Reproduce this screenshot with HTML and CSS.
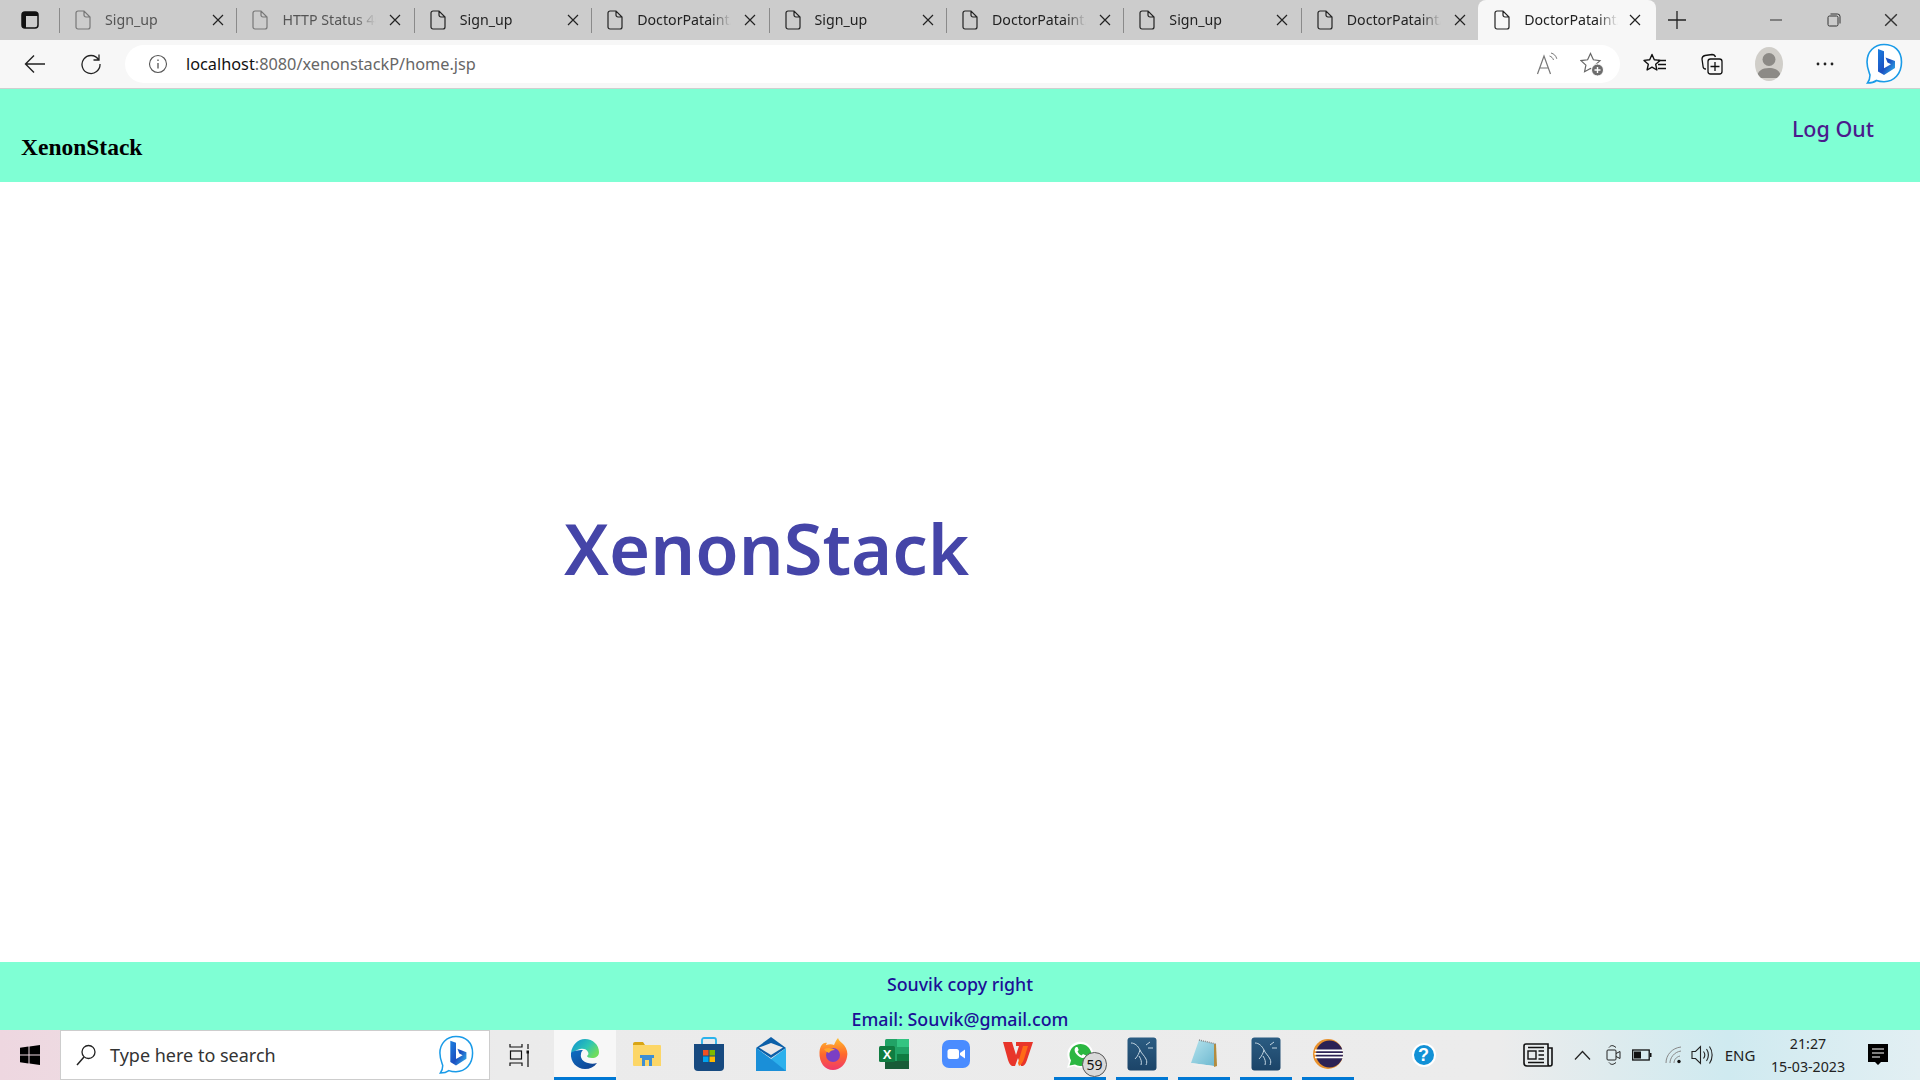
FILE: index.html
```html
<!DOCTYPE html>
<html lang="en">
<head>
    <meta charset="UTF-8">
    <meta name="viewport" content="width=device-width, initial-scale=1.0">
    <title>XenonStack</title>
    <link rel="stylesheet" href="styles.css">
</head>
<body>
    <!-- shared icons -->
    <svg class="defs" width="0" height="0">
        <defs>
            <symbol id="page" viewBox="0 0 16 20"><path d="M1 3a2 2 0 0 1 2-2h6l6 6v10a2 2 0 0 1-2 2H3a2 2 0 0 1-2-2zM9 1v4a2 2 0 0 0 2 2h4" fill="none" stroke="currentColor" stroke-width="1.2"/></symbol>
            <symbol id="cross" viewBox="0 0 12 12"><path d="M1 1l10 10M11 1L1 11" fill="none" stroke="currentColor" stroke-width="1.2"/></symbol>
            <symbol id="bing" viewBox="0 0 38 42">
                <path d="M19 1.500C9 1.500 2 9 2 19c0 6 2 10 3 13 0 3-1 6-2.500 8 4 0 7-1 9-2.500 2 .8 4.500 1.200 7.500 1.200 10 0 17.500-8 17.500-19.700S29 1.500 19 1.500z" fill="#fff" stroke="#1a9be8" stroke-width="1.600"/>
                <path d="M13 6l6 2.200v17l7-4-3.500-1.700-2-5L30 18v7l-11 7-6-3.500z" fill="url(#bingFill)"/>
            </symbol>
            <linearGradient id="bingFill" x1="0" y1="0" x2="1" y2="1"><stop offset="0" stop-color="#1b7fe0"/><stop offset=".55" stop-color="#1d4fc0"/><stop offset="1" stop-color="#35c1f1"/></linearGradient>
            <symbol id="dolphin" viewBox="0 0 30 34">
                <rect x=".5" y=".5" width="29" height="33" rx="3" fill="url(#dbFill)"/>
                <path d="M4 6c4 0 7 3 9 7 1 3 4 5 6 9 1 2 1 4 0 6M13 13c-1 3-2 6-5 9M19 8l4-3M21 11h5M12 19c2 3 3 6 2 9" fill="none" stroke="#c4d6e2" stroke-width="1"/>
            </symbol>
            <linearGradient id="dbFill" x1="0" y1="0" x2="0" y2="1"><stop offset="0" stop-color="#2b5c82"/><stop offset="1" stop-color="#1c4468"/></linearGradient>
            <linearGradient id="edgeTop" x1="0" y1="0" x2="1" y2=".6"><stop offset="0" stop-color="#0f8ed0"/><stop offset=".6" stop-color="#2cc5b5"/><stop offset="1" stop-color="#6fdc5e"/></linearGradient>
            <linearGradient id="edgeLow" x1="0" y1="0" x2="1" y2="1"><stop offset="0" stop-color="#0c6fc4"/><stop offset="1" stop-color="#123f8c"/></linearGradient>
            <linearGradient id="foxFill" x1="0" y1="0" x2="0" y2="1"><stop offset="0" stop-color="#ffbd2e"/><stop offset=".5" stop-color="#ff6a2b"/><stop offset="1" stop-color="#f0386b"/></linearGradient>
            <linearGradient id="noteFill" x1="0" y1="0" x2="1" y2="1"><stop offset="0" stop-color="#b5e4ee"/><stop offset="1" stop-color="#6cb7cf"/></linearGradient>
        </defs>
    </svg>

    <div class="tabstrip">
        <div class="strip-btn">
            <svg width="18" height="18" viewBox="0 0 18 18"><rect x="1" y="1" width="16" height="16" rx="3" fill="none" stroke="#111" stroke-width="1.500"/><path d="M1 4a3 3 0 0 1 3-3h10a3 3 0 0 1 3 3v1H1zM1 5h4v12H4a3 3 0 0 1-3-3z" fill="#111"/></svg>
        </div>
        <div class="tab tab-dim"><svg class="tab-icon"><use href="#page"/></svg><span class="tab-title">Sign_up</span><svg class="tab-close"><use href="#cross"/></svg></div>
        <div class="tab tab-dim"><svg class="tab-icon"><use href="#page"/></svg><span class="tab-title">HTTP Status 40</span><svg class="tab-close"><use href="#cross"/></svg></div>
        <div class="tab"><svg class="tab-icon"><use href="#page"/></svg><span class="tab-title">Sign_up</span><svg class="tab-close"><use href="#cross"/></svg></div>
        <div class="tab"><svg class="tab-icon"><use href="#page"/></svg><span class="tab-title">DoctorPataint/</span><svg class="tab-close"><use href="#cross"/></svg></div>
        <div class="tab"><svg class="tab-icon"><use href="#page"/></svg><span class="tab-title">Sign_up</span><svg class="tab-close"><use href="#cross"/></svg></div>
        <div class="tab"><svg class="tab-icon"><use href="#page"/></svg><span class="tab-title">DoctorPataint/</span><svg class="tab-close"><use href="#cross"/></svg></div>
        <div class="tab"><svg class="tab-icon"><use href="#page"/></svg><span class="tab-title">Sign_up</span><svg class="tab-close"><use href="#cross"/></svg></div>
        <div class="tab"><svg class="tab-icon"><use href="#page"/></svg><span class="tab-title">DoctorPataint/</span><svg class="tab-close"><use href="#cross"/></svg></div>
        <div class="tab tab-active"><svg class="tab-icon"><use href="#page"/></svg><span class="tab-title">DoctorPataint/</span><svg class="tab-close"><use href="#cross"/></svg></div>
        <div class="new-tab"><svg width="18" height="18" viewBox="0 0 18 18"><path d="M9 0v18M0 9h18" stroke="#222" stroke-width="1.300"/></svg></div>
        <div class="win-controls">
            <div class="win-btn"><svg width="14" height="14" viewBox="0 0 14 14"><path d="M1 7h12" stroke="#333" stroke-width="1"/></svg></div>
            <div class="win-btn"><svg width="14" height="14" viewBox="0 0 14 14"><rect x="1" y="3" width="10" height="10" rx="1.500" fill="none" stroke="#333"/><path d="M3.500 1h7a2.500 2.500 0 0 1 2.500 2.500v7" fill="none" stroke="#333"/></svg></div>
            <div class="win-btn"><svg width="14" height="14"><use href="#cross"/></svg></div>
        </div>
    </div>

    <div class="toolbar">
        <div class="tool-btn"><svg width="22" height="20" viewBox="0 0 22 20"><path d="M21 10H2M10 1.500L1.500 10l8.500 8.500" fill="none" stroke="#222" stroke-width="1.400"/></svg></div>
        <div class="tool-btn"><svg width="22" height="22" viewBox="0 0 22 22"><path d="M18.500 6.500A9 9 0 1 0 20 11M19 1.500v5.500h-5.500" fill="none" stroke="#222" stroke-width="1.300"/></svg></div>
        <div class="address">
            <svg class="info-icon" width="20" height="20" viewBox="0 0 20 20"><circle cx="10" cy="10" r="8.500" fill="none" stroke="#555" stroke-width="1.100"/><path d="M10 9v5.500M10 5.500v1.500" stroke="#555" stroke-width="1.300"/></svg>
            <span class="url"><span class="url-host">localhost</span>:8080/xenonstackP/home.jsp</span>
            <div class="address-actions">
                <svg width="24" height="24" viewBox="0 0 24 24"><path d="M1.500 22L8 4l6.500 18M3.800 16h8.400" fill="none" stroke="#777" stroke-width="1.200"/><path d="M13.500 4c2 .6 3.400 2 4 4M15 1c3 .8 5 2.800 5.800 5.800" fill="none" stroke="#777" stroke-width="1"/></svg>
                <svg width="24" height="24" viewBox="0 0 24 24"><path d="M10.500 1.500l2.900 6.300 6.600.8-4.900 4.500 1.300 6.600-5.900-3.300-5.900 3.300 1.300-6.600L1 8.600l6.600-.8z" fill="none" stroke="#666" stroke-width="1.200"/><circle cx="17.500" cy="18" r="6" fill="#6d6d6d" stroke="#fff" stroke-width="1"/><path d="M17.500 15v6M14.500 18h6" stroke="#fff" stroke-width="1.400"/></svg>
            </div>
        </div>
        <div class="tool-group">
            <div class="tool-btn"><svg width="24" height="24" viewBox="0 0 24 24"><path d="M9 2.500l2.300 5.300 5.700.6-4.300 3.900 1.200 5.700-4.900-2.900-4.900 2.900 1.200-5.700L1 8.400l5.700-.6z" fill="none" stroke="#111" stroke-width="1.400" stroke-linejoin="round"/><path d="M15 8.500h8M15 12.500h8M15 16.500h8" stroke="#111" stroke-width="1.400"/></svg></div>
            <div class="tool-btn tool-wide"><svg width="24" height="24" viewBox="0 0 24 24"><path d="M6 17c-2 0-3-1-3-3l-1-7c0-2 1-3 3-3.500l7-1c2 0 3 .8 3.500 2.500" fill="none" stroke="#111" stroke-width="1.300"/><rect x="8" y="7" width="14" height="15" rx="2.500" fill="#f7f7f7" stroke="#111" stroke-width="1.300"/><path d="M15 10v9M10.500 14.500h9" stroke="#111" stroke-width="1.300"/></svg></div>
            <div class="tool-btn"><div class="avatar"><svg width="28" height="28" viewBox="0 0 28 28"><circle cx="14" cy="9.500" r="6.500" fill="#8c8a86"/><path d="M2 28c0-7 5-10 12-10s12 3 12 10z" fill="#8c8a86"/></svg></div></div>
            <div class="tool-btn"><svg width="18" height="4" viewBox="0 0 18 4"><circle cx="2" cy="2" r="1.400" fill="#222"/><circle cx="9" cy="2" r="1.400" fill="#222"/><circle cx="16" cy="2" r="1.400" fill="#222"/></svg></div>
        </div>
        <svg class="bing-btn" width="38" height="42"><use href="#bing"/></svg>
    </div>

    <header class="site-header">
        <span class="brand">XenonStack</span>
        <a class="logout" href="#">Log Out</a>
    </header>

    <main class="content">
        <div class="logo">XenonStack</div>
    </main>

    <footer class="site-footer">
        <p>Souvik copy right</p>
        <p>Email: Souvik@gmail.com</p>
    </footer>

    <div class="taskbar">
        <div class="start"><svg width="20" height="20" viewBox="0 0 20 20"><path d="M0 2.800L8.500 1.600v8H0zM9.500 1.500L20 0v9.600H9.500zM0 10.600h8.500v7.900L0 17.300zM9.500 10.600H20V20L9.500 18.600z" fill="#000"/></svg></div>
        <div class="search">
            <svg width="22" height="24" viewBox="0 0 22 24"><circle cx="13.500" cy="9" r="6.500" fill="none" stroke="#222" stroke-width="1.300"/><path d="M9 14L2 22" stroke="#222" stroke-width="1.500"/></svg>
            <span class="search-text">Type here to search</span>
            <svg class="search-bing" width="36" height="42"><use href="#bing"/></svg>
        </div>
        <div class="task-view"><svg width="20" height="24" viewBox="0 0 20 24"><path d="M1 1v3h12V1M1 23v-3h12v3M19 1v5M19 10v14" fill="none" stroke="#111" stroke-width="1.200"/><rect x="1.500" y="8" width="11" height="8" fill="none" stroke="#111" stroke-width="1.200"/><rect x="17.500" y="7.500" width="3" height="3" fill="#111"/></svg></div>

        <div class="app app-active">
            <svg width="32" height="32" viewBox="0 0 32 32"><path d="M2 15C3 7 9 1 16 1c8 0 14 6 14 13 0 4-3 6-7 6-3 0-5-1-5-2 1-1 2-2 1-4-1-3-5-4-8-3-4 1-8 4-9 4z" fill="url(#edgeTop)"/><path d="M2 15c-1 9 6 16 14 16 5 0 9-2 12-6-3 1-6 1-9 0-5-1-8-5-7-9 0-2 1-3 2-4-5 0-11 1-12 3z" fill="url(#edgeLow)"/></svg>
        </div>
        <div class="app">
            <svg width="30" height="26" viewBox="0 0 30 26"><path d="M1 3a2 2 0 0 1 2-2h8l2 3h-12z" fill="#d9a514"/><path d="M1 4h27a1 1 0 0 1 1 1v20H2a1 1 0 0 1-1-1z" fill="#fcd667"/><path d="M10 25v-8h-2v-3h14v3h-2v8h-3v-6h-4v6z" fill="#3f8fd4"/></svg>
        </div>
        <div class="app">
            <svg width="30" height="34" viewBox="0 0 30 34"><path d="M8 8V3a2 2 0 0 1 2-2h10a2 2 0 0 1 2 2v5" fill="none" stroke="#2ab3ec" stroke-width="1.800"/><path d="M0 7h30v23a4 4 0 0 1-4 4H4a4 4 0 0 1-4-4z" fill="#174a80"/><rect x="9" y="13" width="5.500" height="5.500" fill="#f25022"/><rect x="15.500" y="13" width="5.500" height="5.500" fill="#7fba00"/><rect x="9" y="19.500" width="5.500" height="5.500" fill="#00a4ef"/><rect x="15.500" y="19.500" width="5.500" height="5.500" fill="#ffb900"/></svg>
        </div>
        <div class="app">
            <svg width="30" height="34" viewBox="0 0 30 34"><path d="M0 11L15 0l15 11-15 10z" fill="#0c5fa8"/><path d="M3 10.500L15 6l12 4.500L15 18z" fill="#ebe9e9"/><path d="M0 11l15 11 15-11v23H0z" fill="#2cb0ec"/><path d="M0 34V11l15 11 15 12z" fill="#1a8fd8"/></svg>
        </div>
        <div class="app">
            <svg width="30" height="32" viewBox="0 0 30 32"><path d="M1.500 14C2 7 6 4 9 5c-1 1-1 2-1 2 3-1 6-1 8 0 1-2 2-5 4-7 1 3 3 4 6 7 3 4 4 8 3 12-1 7-7 13-14 13C7 32 1 25 1.500 14z" fill="url(#foxFill)"/><circle cx="15" cy="17" r="7" fill="#7b3fc4"/><path d="M6 11c4-2 9-1 11 1-3 0-5 1-6 3-2-1-4-2-5-4z" fill="#ffa62a"/></svg>
        </div>
        <div class="app">
            <svg width="30" height="30" viewBox="0 0 30 30"><rect x="6" y="0" width="24" height="30" rx="1.500" fill="#21a366"/><rect x="18" y="0" width="12" height="8" fill="#33c481"/><rect x="18" y="15" width="12" height="8" fill="#107c41"/><rect x="6" y="22" width="24" height="8" fill="#185c37"/><rect x="0" y="7" width="16" height="16" rx="1.500" fill="#107c41"/><text class="excel-x" x="8" y="20">X</text></svg>
        </div>
        <div class="app">
            <svg width="28" height="28" viewBox="0 0 28 28"><rect width="28" height="28" rx="7" fill="#4a8cff"/><rect x="5.500" y="9" width="11.500" height="10" rx="2.500" fill="#fff"/><path d="M18 13l5-3.500v9L18 15z" fill="#fff"/></svg>
        </div>
        <div class="app">
            <svg width="30" height="26" viewBox="0 0 30 26"><path d="M0 1h9l4 13 3-9h-3V1h17l-6 18c-1 3-2 5-4 6l-2 0-3-8-3 8-3 0C7 24 6 22 5 19z" fill="#e8352a"/><path d="M20 5h5l-4 13c-1 3-3 6-5 7l-1-3z" fill="#ff6a18"/></svg>
        </div>
        <div class="app app-open">
            <svg width="28" height="30" viewBox="0 0 28 30"><path d="M1 29l2-7a13 13 0 1 1 5 5z" fill="#fff"/><path d="M3.500 26.500l1.500-5a11 11 0 1 1 4 4z" fill="#2bb741"/><path d="M10 8c-1 1-2 2-1 5 1 2 4 5 7 6 2 .5 4-1 4-2.500l-3-1.500-1.500 1.500c-2-1-3-2-4-4l1.200-1.500L11.500 8z" fill="#fff"/></svg>
            <span class="count-badge">59</span>
        </div>
        <div class="app app-open"><svg width="30" height="34"><use href="#dolphin"/></svg></div>
        <div class="app app-open">
            <svg width="30" height="30" viewBox="0 0 30 30"><path d="M10 1l17 4-2 22L2 24z" fill="url(#noteFill)"/><path d="M27 5l1 22-3 1 0-23z" fill="#b38b3e"/><path d="M2 24l23 3 0 1-20-1z" fill="#eee"/><path d="M10 1l17 4" stroke="#8a8a8a" stroke-width="1.500" stroke-dasharray="1 1"/></svg>
        </div>
        <div class="app app-open"><svg width="30" height="34"><use href="#dolphin"/></svg></div>
        <div class="app app-open">
            <svg width="30" height="30" viewBox="0 0 30 30"><circle cx="15" cy="15" r="15" fill="#e8912d"/><circle cx="16.500" cy="15" r="13.500" fill="#2c2255"/><path d="M2 10.500h28v1.800H2zM1.500 14h29v1.800h-29zM2 17.500h28v1.800H2z" fill="#fff"/></svg>
        </div>

        <div class="help-app"><span class="help-icon">?</span></div>

        <div class="tray">
            <div class="tray-news"><svg width="30" height="24" viewBox="0 0 30 24"><path d="M3 1h22v20a2 2 0 0 0 2 2H4a3 3 0 0 1-3-3V3a2 2 0 0 1 2-2zM25 5h4v16a2 2 0 0 1-2 2" fill="none" stroke="#111" stroke-width="1.600"/><rect x="5" y="8" width="8" height="8" fill="none" stroke="#111" stroke-width="1.400"/><path d="M5 4.500h16M15.500 8H21M15.500 12H21M15.500 16H21M5 19.500h16" stroke="#111" stroke-width="1.300"/></svg></div>
            <div class="tray-icon"><svg width="17" height="10" viewBox="0 0 17 10"><path d="M1 9.500L8.500 1.500 16 9.500" fill="none" stroke="#222" stroke-width="1.200"/></svg></div>
            <div class="tray-icon"><svg width="16" height="22" viewBox="0 0 16 22"><path d="M3 3.500C5 1 7 1 10 3.500M3 18.500c2 2.500 4 2.500 7 0" fill="none" stroke="#222"/><rect x="1" y="6" width="9" height="10" rx="1" fill="none" stroke="#222"/><path d="M10 9.500l4-2v7l-4-2" fill="none" stroke="#222"/></svg></div>
            <div class="tray-icon tray-battery"><svg width="20" height="12" viewBox="0 0 20 12"><rect x=".7" y="1" width="16.500" height="10" fill="none" stroke="#111" stroke-width="1.300"/><rect x="2" y="2.500" width="7" height="7" fill="#111"/><rect x="18" y="4" width="1.500" height="4" fill="#111"/></svg></div>
            <div class="tray-icon tray-narrow"><svg width="18" height="18" viewBox="0 0 18 18"><path d="M1 17C1 9 7 2 16 1M5 17c0-5 4-11 11-12M9 17c0-3 2-6 6-7" fill="none" stroke="#888" stroke-width="1"/><circle cx="14" cy="15.500" r="1.700" fill="#111"/></svg></div>
            <div class="tray-icon tray-narrow"><svg width="22" height="20" viewBox="0 0 22 20"><path d="M1 6.500h3.500L9.500 1.500v17l-5-5H1z" fill="none" stroke="#222" stroke-width="1.100"/><path d="M12.500 6.500c1.500 2 1.500 5 0 7M15.500 4c2.500 3.500 2.500 8.500 0 12M18.500 1.500c3.500 5 3.500 12 0 17" fill="none" stroke="#222" stroke-width="1.100"/></svg></div>
            <div class="tray-lang">ENG</div>
            <div class="clock"><span>21:27</span><span>15-03-2023</span></div>
            <div class="notify"><svg width="20" height="22" viewBox="0 0 20 22"><path d="M0 0h20v18h-7l-3 3-3-3H0z" fill="#000"/><path d="M4 5h12M4 9h12M4 13h8" stroke="#fff" stroke-width="1.200"/></svg></div>
        </div>
    </div>
</body>
</html>
```

FILE: styles.css
```css
* {
    box-sizing: border-box;
}
html, body {
    margin: 0;
    height: 100%;
}
body {
    display: flex;
    flex-direction: column;
    height: 1080px;
    overflow: hidden;
    background: #fff;
    font-family: 'Noto Sans', sans-serif;
}
.defs {
    position: absolute;
}
svg {
    display: block;
    flex: none;
}

/* browser tabs */
.tabstrip {
    display: flex;
    flex: none;
    height: 40px;
    background: #cccccc;
}
.strip-btn {
    display: flex;
    align-items: center;
    justify-content: center;
    width: 59px;
}
.tab {
    display: flex;
    align-items: center;
    flex: none;
    position: relative;
    width: 177.4px;
    padding-left: 16px;
    color: #222;
}
.tab::before {
    content: '';
    position: absolute;
    left: 0;
    top: 8px;
    height: 25px;
    border-left: 1px solid #8a8a8a;
}
.tab-dim {
    color: #777;
}
.tab-dim .tab-title {
    color: #555;
}
.tab-active {
    background: #f7f7f7;
    border-radius: 8px 8px 0 0;
}
.tab-active::before {
    display: none;
}
.tab-icon {
    width: 16px;
    height: 20px;
}
.tab-title {
    flex: none;
    width: 94px;
    margin: 0 0 2px 14px;
    font-size: 14.2px;
    white-space: nowrap;
    overflow: hidden;
    -webkit-mask-image: linear-gradient(90deg, #000 78%, transparent 100%);
    mask-image: linear-gradient(90deg, #000 78%, transparent 100%);
}
.tab-close {
    width: 12px;
    height: 12px;
    margin-left: 13px;
    color: #222;
}
.tab-active .tab-close {
    margin-left: 11px;
}
.new-tab {
    display: flex;
    align-items: center;
    justify-content: center;
    width: 43px;
}
.win-controls {
    display: flex;
    margin-left: auto;
}
.win-btn {
    display: flex;
    align-items: center;
    justify-content: center;
    width: 57.5px;
    color: #333;
}

/* address bar row */
.toolbar {
    display: flex;
    align-items: center;
    flex: none;
    height: 49px;
    padding-left: 7px;
    background: #f7f7f7;
    border-bottom: 1px solid #cfcfcf;
}
.tool-btn {
    display: flex;
    align-items: center;
    justify-content: center;
    width: 56px;
    height: 38px;
}
.tool-wide {
    width: 58px;
}
.address {
    display: flex;
    align-items: center;
    width: 1495px;
    height: 38px;
    margin-left: 6px;
    margin-top: -1px;
    padding: 0 16px 0 23px;
    background: #fff;
    border-radius: 19px;
}
.url {
    margin-left: 18px;
    font-size: 16.3px;
    color: #666;
}
.url-host {
    color: #111;
}
.address-actions {
    display: flex;
    gap: 20px;
    margin-left: auto;
}
.tool-group {
    display: flex;
    margin-left: 7px;
}
.avatar {
    width: 28px;
    height: 34px;
    border-radius: 50%;
    overflow: hidden;
    background: #d0cec9;
    padding-top: 3px;
}
.bing-btn {
    margin-left: 12px;
}

/* page */
.site-header {
    display: flex;
    justify-content: space-between;
    flex: none;
    height: 93px;
    padding: 0 46px 0 21px;
    background: #7fffd4;
}
.brand {
    margin-top: 45px;
    font-family: 'Liberation Serif', serif;
    font-weight: bold;
    font-size: 23.5px;
    color: #000;
}
.logout {
    margin-top: 25px;
    font-size: 21.5px;
    font-weight: 500;
    color: #4b1a8c;
    text-decoration: none;
}
.content {
    flex: 1;
    padding: 322px 0 0 564px;
}
.logo {
    font-size: 70.5px;
    font-weight: 600;
    line-height: 88px;
    color: #4545a8;
}
.site-footer {
    flex: none;
    height: 68px;
    overflow: hidden;
    background: #7fffd4;
    color: #1b0f96;
    text-align: center;
    font-size: 17.8px;
    font-weight: 500;
}
.site-footer p {
    margin: 10px 0 6px;
    line-height: 25px;
}

/* windows taskbar */
.taskbar {
    display: flex;
    flex: none;
    height: 50px;
    background: linear-gradient(90deg, #eed7e0 0, #ebebeb 26%, #ececec 78%, #cfeaf0 90%, #e2eff3 100%);
}
.start {
    display: flex;
    align-items: center;
    justify-content: center;
    width: 60px;
}
.search {
    display: flex;
    align-items: center;
    width: 430px;
    padding: 0 15px 0 14px;
    background: #fff;
    border: 1px solid #cdcdcd;
}
.search-text {
    margin-left: 13px;
    font-size: 18px;
    color: #333;
}
.search-bing {
    margin-left: auto;
}
.task-view {
    display: flex;
    align-items: center;
    justify-content: center;
    width: 64px;
    padding-right: 6px;
}
.app {
    display: flex;
    align-items: center;
    justify-content: center;
    position: relative;
    width: 61.9px;
    padding-bottom: 2px;
}
.app-open::after,
.app-active::after {
    content: '';
    position: absolute;
    left: 5px;
    right: 5px;
    bottom: 0;
    height: 3px;
    background: #0078d4;
}
.app-active {
    background: #f7f7f7;
}
.app-active::after {
    left: 0;
    right: 0;
}
.excel-x {
    font-family: 'Liberation Sans', sans-serif;
    font-size: 13px;
    font-weight: bold;
    fill: #fff;
    text-anchor: middle;
}
.count-badge {
    position: absolute;
    left: 33px;
    top: 22px;
    width: 25px;
    height: 25px;
    border: 1px solid #555;
    border-radius: 50%;
    background: #d9d9d9;
    font-size: 14px;
    line-height: 23px;
    text-align: center;
    color: #111;
}
.help-app {
    display: flex;
    align-items: center;
    justify-content: center;
    width: 62px;
    margin-left: 34px;
}
.help-icon {
    width: 24px;
    height: 24px;
    border: 2px solid #fff;
    border-radius: 50%;
    background: #1291d6;
    color: #fff;
    font-family: 'Liberation Sans', sans-serif;
    font-weight: bold;
    font-size: 18px;
    line-height: 20px;
    text-align: center;
}
.tray {
    display: flex;
    align-items: center;
    margin-left: auto;
    height: 100%;
}
.tray-news {
    display: flex;
    justify-content: center;
    width: 54px;
    margin-right: 2px;
}
.tray-icon {
    display: flex;
    justify-content: center;
    width: 31px;
}
.tray-battery {
    padding-right: 5px;
}
.tray-narrow {
    width: 28px;
}
.tray-lang {
    width: 40px;
    margin: 0 10px 0 4px;
    font-size: 15px;
    text-align: center;
    color: #222;
}
.clock {
    display: flex;
    flex-direction: column;
    align-items: center;
    gap: 4px;
    width: 76px;
    font-size: 14.2px;
    line-height: 19px;
    color: #222;
    white-space: nowrap;
}
.notify {
    display: flex;
    justify-content: center;
    width: 74px;
    padding-right: 10px;
}
```
